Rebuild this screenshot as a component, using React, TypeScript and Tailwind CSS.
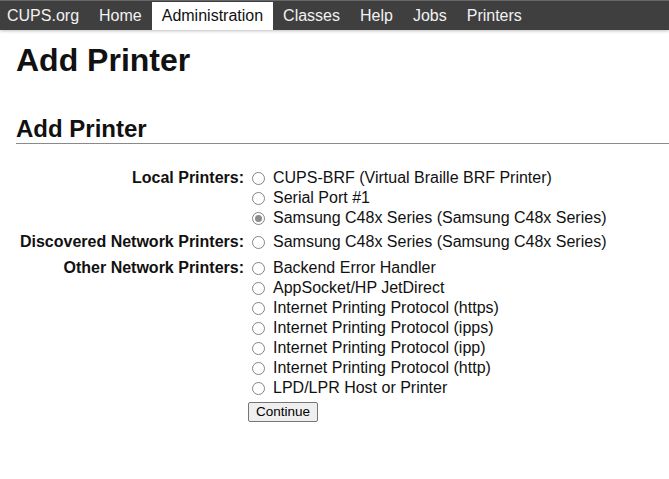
import React from 'react';

const navItems = ['CUPS.org', 'Home', 'Administration', 'Classes', 'Help', 'Jobs', 'Printers'];

const groups: { label: string; options: { name: string; checked?: boolean }[]; className: string }[] = [
  {
    label: 'Local Printers:',
    className: '',
    options: [
      { name: 'CUPS-BRF (Virtual Braille BRF Printer)' },
      { name: 'Serial Port #1' },
      { name: 'Samsung C48x Series (Samsung C48x Series)', checked: true },
    ],
  },
  {
    label: 'Discovered Network Printers:',
    className: 'mt-[4px]',
    options: [{ name: 'Samsung C48x Series (Samsung C48x Series)' }],
  },
  {
    label: 'Other Network Printers:',
    className: 'mt-[6px]',
    options: [
      { name: 'Backend Error Handler' },
      { name: 'AppSocket/HP JetDirect' },
      { name: 'Internet Printing Protocol (https)' },
      { name: 'Internet Printing Protocol (ipps)' },
      { name: 'Internet Printing Protocol (ipp)' },
      { name: 'Internet Printing Protocol (http)' },
      { name: 'LPD/LPR Host or Printer' },
    ],
  },
];

const Radio: React.FC<{ checked?: boolean }> = ({ checked }) => (
  <span className="w-[13px] h-[13px] rounded-full border border-[#858585] bg-white flex items-center justify-center shrink-0">
    {checked && <span className="w-[7px] h-[7px] rounded-full bg-[#8c8c8c]"></span>}
  </span>
);

export default function App() {
  return (
    <div className="min-h-[479px] bg-white text-black font-['Liberation_Sans',Arial,sans-serif]">
      {/* top navigation */}
      <div className="h-[30px] bg-[#3f3f3f] border-t border-[#666] flex items-end shadow-[0_1px_3px_rgba(0,0,0,0.25)]">
        {navItems.map((item, i) => (
          <div
            key={item}
            className={`h-[28px] flex items-center text-[16px] ${i === 0 ? 'pl-[7px] pr-[10px]' : 'px-[10px]'} ${
              item === 'Administration' ? 'bg-white text-[#111]' : 'text-[#f2f2f2]'
            }`}
          >
            {item}
          </div>
        ))}
      </div>

      <div className="pl-[16px]">
        <h1 className="mt-[12px] text-[32px] leading-[36px] font-bold text-[#111]">Add Printer</h1>
        <h2 className="mt-[37px] text-[24px] leading-[28px] font-bold text-[#111] border-b border-[#8a8a8a]">
          Add Printer
        </h2>

        {/* printer choices */}
        <div className="mt-[24px] text-[16px] leading-[20px] text-[#111]">
          {groups.map((g) => (
            <div key={g.label} className={`flex ${g.className}`}>
              <div className="w-[228px] text-right font-bold">{g.label}</div>
              <div className="pl-[8px]">
                {g.options.map((o) => (
                  <div key={o.name} className="h-[20px] flex items-center gap-[8px]">
                    <Radio checked={o.checked} />
                    <span>{o.name}</span>
                  </div>
                ))}
              </div>
            </div>
          ))}
          <div className="pl-[232px] mt-[3px]">
            <button className="h-[20px] px-[7px] text-[13.5px] leading-[18px] bg-[#efefef] border border-[#767676] rounded-[2px] text-black">
              Continue
            </button>
          </div>
        </div>
      </div>
    </div>
  );
}
